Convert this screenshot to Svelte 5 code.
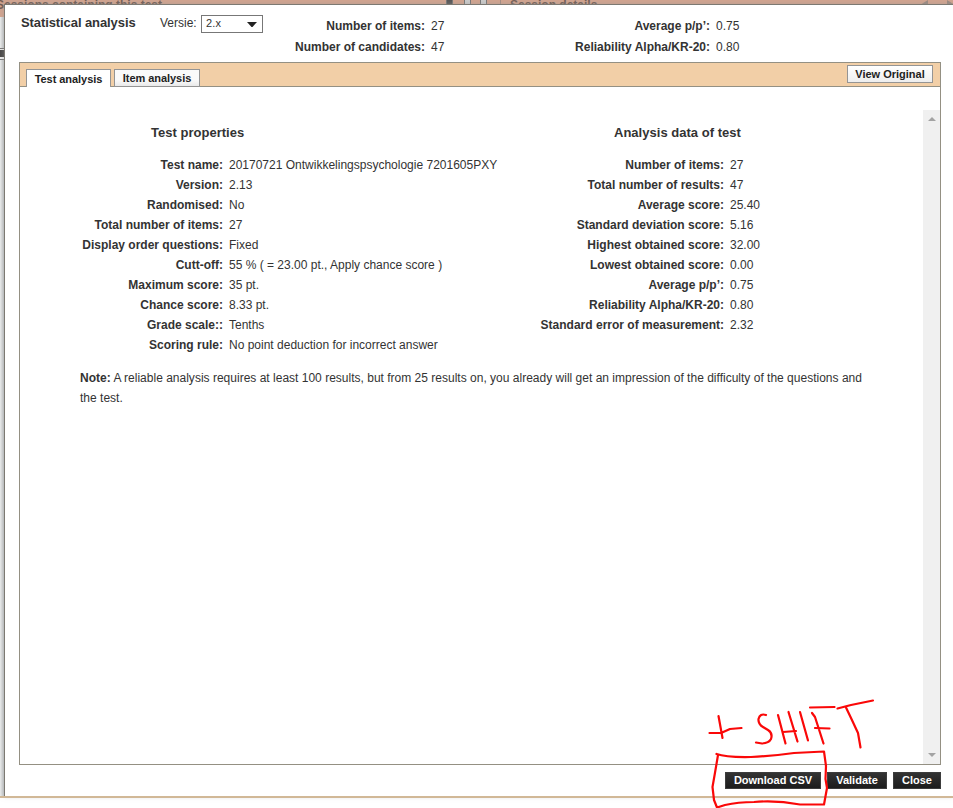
<script>
  const summaryLeft = [
    ['Number of items:', '27'],
    ['Number of candidates:', '47']
  ];
  const summaryRight = [
    ['Average p/p’:', '0.75'],
    ['Reliability Alpha/KR-20:', '0.80']
  ];
  const properties = [
    ['Test name:', '20170721 Ontwikkelingspsychologie 7201605PXY'],
    ['Version:', '2.13'],
    ['Randomised:', 'No'],
    ['Total number of items:', '27'],
    ['Display order questions:', 'Fixed'],
    ['Cutt-off:', '55 % ( = 23.00 pt., Apply chance score )'],
    ['Maximum score:', '35 pt.'],
    ['Chance score:', '8.33 pt.'],
    ['Grade scale::', 'Tenths'],
    ['Scoring rule:', 'No point deduction for incorrect answer']
  ];
  const analysis = [
    ['Number of items:', '27'],
    ['Total number of results:', '47'],
    ['Average score:', '25.40'],
    ['Standard deviation score:', '5.16'],
    ['Highest obtained score:', '32.00'],
    ['Lowest obtained score:', '0.00'],
    ['Average p/p’:', '0.75'],
    ['Reliability Alpha/KR-20:', '0.80'],
    ['Standard error of measurement:', '2.32']
  ];
</script>

{#snippet rows(list)}
  {#each list as [label, value]}
    <div class="row"><b>{label}</b><span>{value}</span></div>
  {/each}
{/snippet}

<div class="page">
  <div class="behind">
    <span class="sessions">Sessions containing this test</span>
    <i class="tool dark"></i><i class="tool second"></i><i class="tool third"></i>
    <span class="details">Session details</span>
    <svg class="arrows" width="36" height="5" viewBox="0 0 36 5"><path d="M8 0v5H0zM27 0l8 5h-8z" fill="#9b8980" /></svg>
  </div>
  <div class="edge"><i></i></div>

  <div class="dialog">
    <header>
      <h1>Statistical analysis</h1>
      <label for="versie">Versie:</label>
      <button class="select" id="versie">
        <span>2.x</span>
        <svg width="10" height="5" viewBox="0 0 10 5"><path d="M0 0h10L5.5 5h-1z" fill="#222" /></svg>
      </button>
      <div class="summary one">{@render rows(summaryLeft)}</div>
      <div class="summary two">{@render rows(summaryRight)}</div>
    </header>

    <section class="panel">
      <nav>
        <button class="tab active">Test analysis</button>
        <button class="tab">Item analysis</button>
        <button class="original">View Original</button>
      </nav>
      <div class="body">
        <div class="content">
          <div class="columns">
            <div class="props">
              <h2>Test properties</h2>
              {@render rows(properties)}
            </div>
            <div class="data">
              <h2>Analysis data of test</h2>
              {@render rows(analysis)}
            </div>
          </div>
          <p><b>Note:</b> A reliable analysis requires at least 100 results, but from 25 results on, you already will get an impression of the difficulty of the questions and the test.</p>
        </div>
        <div class="scroll">
          <svg width="8" height="4" viewBox="0 0 8 4"><path d="M0 4L4 0l4 4z" fill="#a3a3a3" /></svg>
          <svg width="8" height="4" viewBox="0 0 8 4"><path d="M0 0h8L4 4z" fill="#a3a3a3" /></svg>
        </div>
      </div>
    </section>

    <footer>
      <button class="csv">Download CSV</button>
      <button class="validate">Validate</button>
      <button class="close">Close</button>
    </footer>
  </div>
  <div class="baseline"></div>

  <svg class="ink" width="180" height="118" viewBox="0 0 180 118" fill="none" stroke="#fa0808" stroke-width="2.2" stroke-linecap="round" stroke-linejoin="round">
    <path d="M28.500 26L32.500 48M19.500 43L31 43L40 39L51.500 38" />
    <path d="M76 25Q70 23 68.500 29Q68 34 73 37L78 40Q83 43 81 49Q79 53 72 53.500L66 52.500" />
    <path d="M88 25L95.500 53.500M98.500 22L107.500 51.500M93 42L106 41" />
    <path d="M110 22L118 50.500M122 23L125 27L133.500 53.500M120 17.500L144.500 17M125 38L139.500 38.500" />
    <path d="M147.500 18.500L161 15L183 10.500M156 17.500L161 28L168 43L170.500 57.500" />
    <path d="M26.500 64Q36 67.500 61 67Q82 66 104 63L134 61.500L136 76L135.500 89L137 98L134 114.500L110 114.500Q86 110 64 112Q48 112 35 115L27 117.500L24 110L22.500 97Q25 83 28 65" />
  </svg>
</div>

<style>
  :global(body) { margin: 0; background: #fff; }
  .page {
    position: relative; width: 953px; height: 808px; overflow: hidden;
    font: 12px/20px "Liberation Sans", Arial, sans-serif; color: #333;
    background: #fff;
  }
  .behind { height: 17px; background: #d2a48f; position: relative; }
  .sessions, .details { position: absolute; top: -5px; font-weight: bold; color: #715c54; white-space: nowrap; }
  .sessions { left: -4px; font-size: 12px; }
  .details { left: 510px; }
  .details::before { content: ""; position: absolute; left: -10px; top: 5px; width: 1px; height: 12px; background: #a58d83; }
  .tool { position: absolute; left: 446px; top: 0; width: 5px; height: 5px; background: #ccc; border-left: 1px solid #777; border-right: 1px solid #777; }
  .dark { background: #555; }
  .second { left: 464px; }
  .third { left: 480px; }
  .arrows { position: absolute; left: 920px; top: 0; }
  .edge { width: 4px; height: 779px; background: linear-gradient(90deg, #eceeee, #c3c6c8); padding-top: 32px; box-sizing: border-box; }
  .edge i { display: block; height: 7px; background: #494747; border-top: 1px solid #eee; border-bottom: 2px solid #eee; outline: 1px solid #777; }
  .dialog {
    position: absolute; left: 4px; top: 4px; width: 949px; height: 792px; box-sizing: border-box;
    border: solid #7c7972; border-width: 1px 0 0 1px; background: #fff; box-shadow: 0 0 5px #9998;
    padding: 0 12px 0 14px; display: flex; flex-direction: column;
  }
  header { height: 57px; display: flex; flex: none; }
  h1, h2 { font-size: 13px; margin: 0; line-height: 20px; color: #333; }
  h1 { width: 139px; margin: 8px 0 0 2px; letter-spacing: -.09px; white-space: nowrap; }
  label { width: 41px; margin-top: 8px; }
  button { font: bold 11px/16px "Liberation Sans", Arial, sans-serif; padding: 0; margin: 0; box-sizing: border-box; border-radius: 0; color: #222; white-space: nowrap; }
  .select { width: 62px; height: 18px; margin-top: 10px; border: 1px solid #777; background: #fff; display: flex; justify-content: space-between; align-items: center; padding: 0 5px 0 4px; font-weight: normal; color: #333; }
  .select span { margin-top: -2px; letter-spacing: .2px; }
  .row { display: flex; height: 20px; white-space: nowrap; }
  .row b { text-align: right; flex: none; margin-right: 6px; }
  .summary { margin-top: 11px; }
  .summary .row { height: 21px; }
  .one .row b { width: 162px; }
  .one { width: 291px; }
  .two .row b { width: 156px; }
  .panel { width: 922px; height: 703px; box-sizing: border-box; border: 1px solid #949083; flex: none; }
  nav { height: 24px; box-sizing: border-box; background: #f2cfa7; border-bottom: 1px solid #949083; display: flex; padding: 6px 7px 0 6px; }
  .tab { height: 18px; width: 86px; border: 1px solid #949494; background: linear-gradient(#fafafa 60%, #e9e9e9); letter-spacing: -.05px; }
  .tab.active { width: 85px; background: #fff; border-bottom: 0; height: 18px; line-height: 18px; margin-right: 3px; position: relative; }
  .original { margin: -4px 0 0 auto; width: 86px; height: 18px; border: 1px solid #949494; background: linear-gradient(#fff, #eee); }
  .body { height: 677px; padding-top: 23px; box-sizing: border-box; display: flex; }
  .content { flex: 1; padding: 13px 0 0 60px; }
  .columns { display: flex; height: 245px; }
  .props { width: 459px; }
  h2 { margin-bottom: 12px; letter-spacing: .02px; }
  .props h2 { padding-left: 71px; }
  .data h2 { padding-left: 75px; }
  .props .row b { width: 143px; }
  .data .row b { width: 185px; }
  p { margin: 0; width: 800px; letter-spacing: .007px; }
  .scroll { width: 17px; background: #f0f0f0; display: flex; flex-direction: column; justify-content: space-between; align-items: center; padding: 7px 0; box-sizing: border-box; }
  footer { display: flex; justify-content: flex-end; gap: 6px; padding-top: 7px; }
  footer button { height: 17px; border: 1px solid #3c3c3c; background: linear-gradient(#333, #1c1c1c); color: #fff; line-height: 15px; }
  .csv { width: 96px; }
  .validate { width: 60px; }
  .close { width: 48px; }
  .baseline { position: absolute; left: 0; top: 796px; width: 953px; height: 2px; background: #d1b897; }
  .ink { position: absolute; left: 690px; top: 690px; overflow: visible; }
</style>
